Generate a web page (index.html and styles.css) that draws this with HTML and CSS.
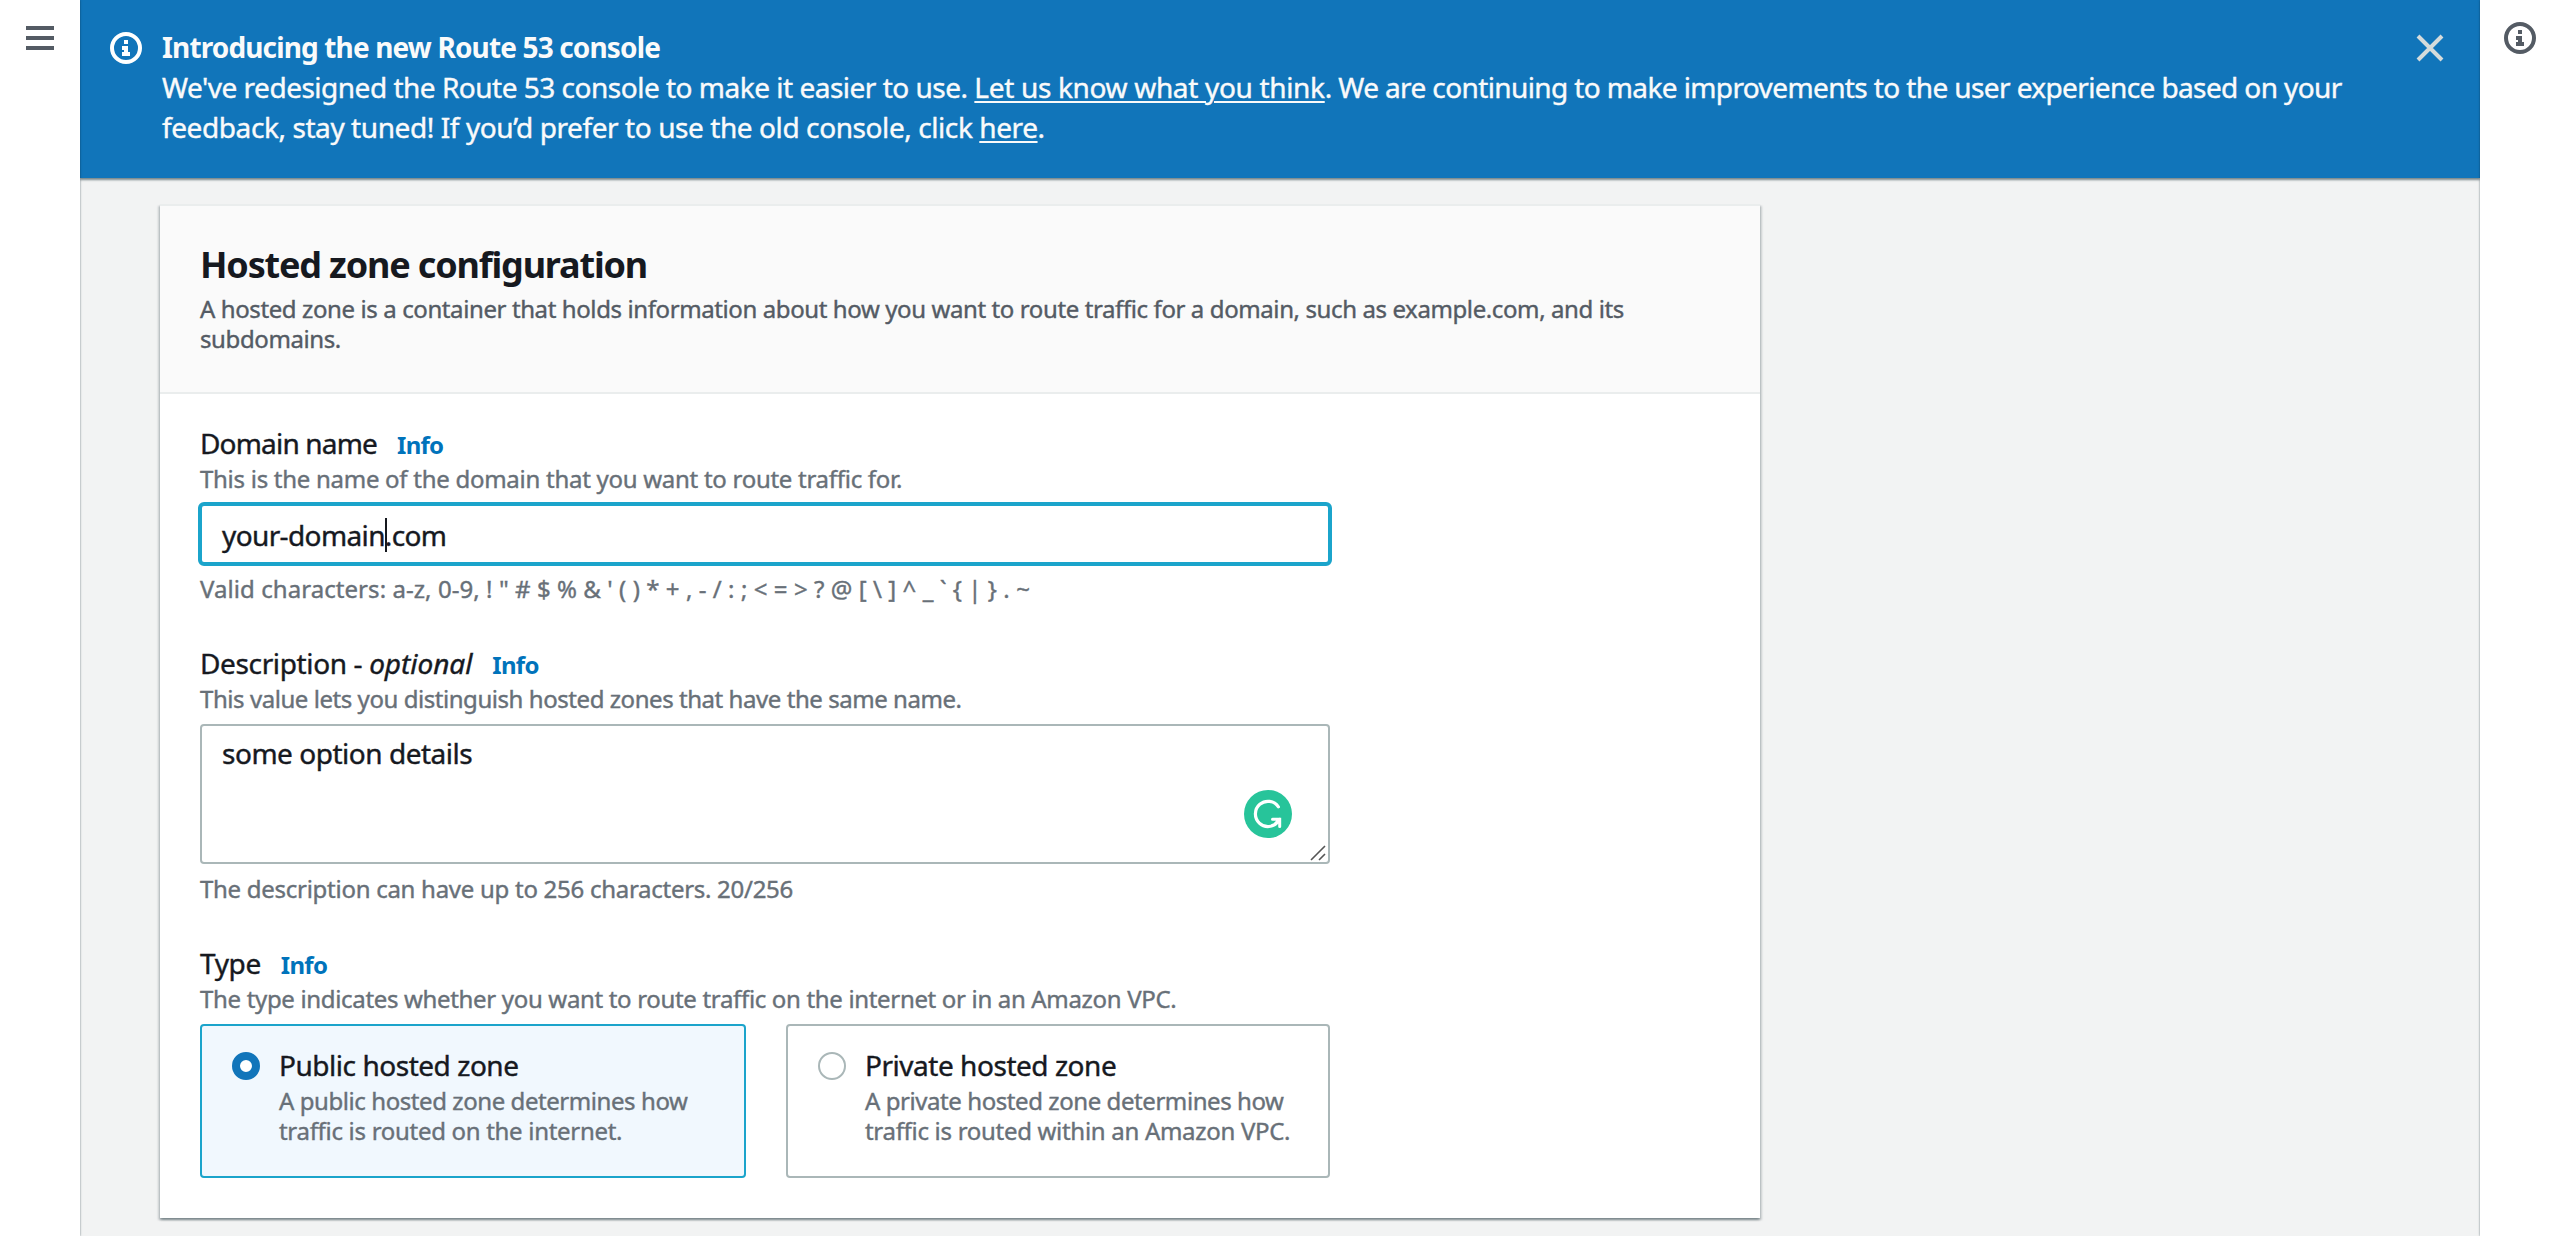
FILE: index.html
```
<!DOCTYPE html>
<html lang="en">
<head>
<meta charset="utf-8">
<title>Create hosted zone</title>
<link rel="stylesheet" href="styles.css">
</head>
<body>
<div class="layout">
  <nav class="rail rail-left">
    <button class="icon-button" aria-label="Open navigation">
      <svg width="28" height="24" viewBox="0 0 28 24"><path d="M0 2h28M0 12h28M0 22h28" stroke="#545b64" stroke-width="4"/></svg>
    </button>
  </nav>
  <main class="main">
    <section class="flash">
      <svg class="flash-icon" width="32" height="32" viewBox="0 0 32 32"><circle cx="16" cy="16" r="14" fill="none" stroke="#fff" stroke-width="4"/><path d="M14 8h4v4h-4zM12 14h6v6h2v4h-8v-4h2v-2h-2z" fill="#fff"/></svg>
      <div class="flash-text">
        <h2 class="flash-title">Introducing the new Route 53 console</h2>
        <p class="flash-body">We've redesigned the Route 53 console to make it easier to use. <a class="feedback" href="#">Let us know what you think</a><span class="flash-more">. We are continuing to make improvements to the user experience based on your</span></p>
        <p class="flash-body flash-second">feedback, stay tuned! If you’d prefer to use the old console, click <a href="#">here</a>.</p>
      </div>
      <button class="icon-button flash-close" aria-label="Dismiss">
        <svg width="28" height="28" viewBox="0 0 28 28"><path d="M2 2l24 24M26 2L2 26" stroke="#d5dbdb" stroke-width="4"/></svg>
      </button>
    </section>
    <section class="card">
      <header class="card-header">
        <h1 class="card-title">Hosted zone configuration</h1>
        <p class="card-subtitle">A hosted zone is a container that holds information about how you want to route traffic for a domain, such as example.com, and its<br>subdomains.</p>
      </header>
      <form class="card-body">
        <div class="field">
          <div class="label-row"><label class="label tight">Domain name</label><a class="info" href="#">Info</a></div>
          <p class="hint">This is the name of the domain that you want to route traffic for.</p>
          <div class="input focused"><span>your-domain</span><i class="caret"></i><span>.com</span></div>
          <p class="hint constraint chars">Valid characters: a-z, 0-9, ! " # $ % &amp; ' ( ) * + , - / : ; &lt; = &gt; ? @ [ \ ] ^ _ ` { | } . ~</p>
        </div>
        <div class="field">
          <div class="label-row"><label class="label">Description - <em>optional</em></label><a class="info" href="#">Info</a></div>
          <p class="hint description-hint">This value lets you distinguish hosted zones that have the same name.</p>
          <div class="textarea">some option details
            <svg class="checker" width="48" height="48" viewBox="0 0 48 48"><circle cx="24" cy="24" r="24" fill="#27c49a"/><path d="M34.4 16.8A12.6 12.6 0 1 0 34 31.6" fill="none" stroke="#fff" stroke-width="3.2" stroke-linecap="round"/><path d="M28.5 29.2h7.2v7.3M35.7 29.2L31.5 33.6" fill="none" stroke="#fff" stroke-width="3" stroke-linecap="round"/></svg>
            <svg class="grip" width="16" height="16" viewBox="0 0 16 16"><path d="M1 15L15 1M9 15l6-6" stroke="#555" stroke-width="1.6"/></svg>
          </div>
          <p class="hint constraint">The description can have up to 256 characters. 20/256</p>
        </div>
        <div class="field">
          <div class="label-row"><label class="label">Type</label><a class="info" href="#">Info</a></div>
          <p class="hint type-hint">The type indicates whether you want to route traffic on the internet or in an Amazon VPC.</p>
          <div class="tiles">
            <div class="tile selected">
              <span class="radio"></span>
              <div>
                <div class="tile-label">Public hosted zone</div>
                <p class="hint tile-text">A public hosted zone determines how</p>
                <p class="hint tile-text tile-second">traffic is routed on the internet.</p>
              </div>
            </div>
            <div class="tile">
              <span class="radio"></span>
              <div>
                <div class="tile-label">Private hosted zone</div>
                <p class="hint tile-text">A private hosted zone determines how</p>
                <p class="hint tile-text tile-second">traffic is routed within an Amazon VPC.</p>
              </div>
            </div>
          </div>
        </div>
      </form>
    </section>
  </main>
  <aside class="rail rail-right">
    <button class="icon-button" aria-label="Open help panel">
      <svg width="32" height="32" viewBox="0 0 32 32"><circle cx="16" cy="16" r="14" fill="none" stroke="#545b64" stroke-width="4"/><path d="M14 8h4v4h-4zM12 14h6v6h2v4h-8v-4h2v-2h-2z" fill="#545b64"/></svg>
    </button>
  </aside>
</div>
</body>
</html>
```
FILE: styles.css
```
* {
  box-sizing: border-box;
}

body {
  margin: 0;
  font-family: "Noto Sans", "Open Sans", sans-serif;
  font-size: 28px;
  line-height: 40px;
  color: #16191f;
  background: #fff;
  -webkit-text-stroke: 0.4px currentColor;
}

h1, h2, .info {
  -webkit-text-stroke: 0;
}

h1, h2, p {
  margin: 0;
}

svg {
  display: block;
}

.layout {
  display: flex;
  height: 1236px;
  overflow: hidden;
}

.rail {
  position: relative;
  z-index: 1;
  flex: none;
  width: 80px;
  background: #fff;
  box-shadow: 0 0 2px rgba(0, 28, 36, 0.55);
}

.rail-left {
  padding: 26px 26px 0;
}

.rail-right {
  padding: 22px 24px 0;
}

.icon-button {
  display: block;
  padding: 0;
  border: 0;
  background: none;
}

.main {
  flex: 1;
  background: #f2f3f3;
}

.flash {
  display: flex;
  height: 178px;
  padding: 28px 36px 0 30px;
  color: #fafafa;
  background: #1175ba;
  box-shadow: 0 2px 2px rgba(0, 28, 36, 0.5);
}

.flash-icon {
  flex: none;
  margin-top: 4px;
}

.flash-text {
  flex: 1;
  margin: -1px 0 0 20px;
  white-space: nowrap;
}

.flash-title {
  font-size: 28px;
  font-weight: 700;
  line-height: 40px;
  letter-spacing: -0.0306em;
}

.flash-body {
  letter-spacing: -0.0177em;
}

.flash-body a {
  color: inherit;
  text-decoration-thickness: 2px;
  text-underline-offset: 3px;
}

.flash-body .feedback {
  letter-spacing: -0.0117em;
}

.flash-more {
  letter-spacing: -0.0218em;
}

.flash-second {
  letter-spacing: -0.0148em;
}

.flash-close {
  align-self: flex-start;
  margin-top: 6px;
}

.card {
  width: 1600px;
  height: 1014px;
  margin: 26px 0 0 80px;
  border-top: 2px solid #eaeded;
  background: #fff;
  box-shadow: 0 2px 2px rgba(0, 28, 36, 0.3), 2px 2px 2px rgba(0, 28, 36, 0.15), -2px 2px 2px rgba(0, 28, 36, 0.15);
}

.card-header {
  height: 188px;
  padding: 37px 40px 0;
  border-bottom: 2px solid #eaeded;
  background: #fafafa;
}

.card-title {
  font-size: 36px;
  font-weight: 700;
  line-height: 44px;
  letter-spacing: -0.0326em;
}

.card-subtitle {
  margin-top: 7px;
  font-size: 24px;
  line-height: 30px;
  letter-spacing: -0.0165em;
  white-space: nowrap;
  color: #545b64;
}

.card-body {
  display: flex;
  flex-direction: column;
  gap: 39px;
  width: 1210px;
  padding: 29px 40px 0;
}

.label-row {
  display: flex;
  align-items: baseline;
  gap: 20px;
}

.label {
  letter-spacing: -0.013em;
}

.label em {
  letter-spacing: -0.002em;
}

.label.tight {
  letter-spacing: -0.0294em;
}

.info {
  font-size: 24px;
  font-weight: 700;
  line-height: 30px;
  letter-spacing: -0.03em;
  text-decoration: none;
  color: #0073bb;
}

.hint {
  margin-top: 1px;
  font-size: 24px;
  line-height: 30px;
  letter-spacing: -0.0115em;
  white-space: nowrap;
  color: #687078;
}

.description-hint {
  letter-spacing: -0.0185em;
}

.type-hint {
  letter-spacing: -0.0137em;
}

.constraint {
  margin-top: 10px;
}

.chars {
  letter-spacing: 0.0027em;
}

.input {
  display: flex;
  align-items: center;
  height: 64px;
  margin: 8px -2px 0;
  padding: 2px 20px 0;
  border: 4px solid #1ba4cb;
  border-radius: 6px;
  letter-spacing: -0.0222em;
}

.input + .constraint {
  margin-top: 8px;
}

.caret {
  width: 2px;
  height: 34px;
  margin-right: -2px;
  background: #16191f;
}

.textarea {
  position: relative;
  height: 140px;
  margin-top: 10px;
  padding: 7px 20px;
  border: 2px solid #aab7b8;
  border-radius: 4px;
  letter-spacing: -0.017em;
}

.checker {
  position: absolute;
  right: 36px;
  bottom: 24px;
}

.grip {
  position: absolute;
  right: 2px;
  bottom: 1px;
}

.tiles {
  display: grid;
  grid-template-columns: 546px 544px;
  gap: 40px;
  margin-top: 10px;
}

.tile {
  display: flex;
  gap: 19px;
  height: 154px;
  padding: 19px 30px;
  border: 2px solid #aab7b8;
  border-radius: 4px;
}

.tile.selected {
  border-color: #1ba4cb;
  background: #f1f8fe;
}

.radio {
  flex: none;
  width: 28px;
  height: 28px;
  margin-top: 7px;
  border: 2px solid #aab7b8;
  border-radius: 50%;
  background: #fff;
}

.selected .radio {
  border: 8px solid #1175ba;
}

.tile-label {
  letter-spacing: -0.0166em;
}

.tile-text {
  letter-spacing: -0.0178em;
}

.tile-second {
  margin-top: 0;
  letter-spacing: -0.0125em;
}
```
